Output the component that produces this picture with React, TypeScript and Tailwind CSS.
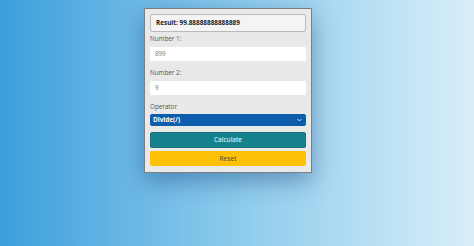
import React from "react";

export default function App() {
  return (
    <div
      className="w-[474px] h-[246px] overflow-hidden bg-gradient-to-r from-[#3a9fdc] via-[#8ccbec] to-[#d8eef9] pt-[8px]"
      style={{ fontFamily: '"Open Sans", "Noto Sans", sans-serif' }}
    >
      <div className="ml-[144px] w-[168px] bg-[#e9e9e9] border border-[#7a7f86] px-[5px] pt-[5px] pb-[6px] shadow-[0_8px_22px_rgba(10,50,110,0.4)]">
        <div className="h-[18px] flex items-center px-[5px] bg-[#f4f4f4] border border-[#b9b9b9] rounded-[2px] text-[6.4px] font-bold text-[#222]">
          Result: 99.88888888888889
        </div>
        <div className="mt-[1px] mb-[2px] h-[12px] leading-[12px] text-[6.3px] text-[#555]">Number 1:</div>
        <div className="h-[14px] bg-white flex items-center px-[5px] text-[6.2px] text-[#777]">899</div>
        <div className="mt-[6px] mb-[2px] h-[12px] leading-[12px] text-[6.3px] text-[#555]">Number 2:</div>
        <div className="h-[14px] bg-white flex items-center px-[5px] text-[6.2px] text-[#777]">9</div>
        <div className="mt-[6px] mb-[1px] h-[12px] leading-[12px] text-[6.3px] text-[#555]">Operator</div>
        <div className="h-[12px] bg-[#0c5ead] rounded-[2px] flex items-center justify-between pl-[3px] pr-[3px] text-[6.4px] font-bold text-white">
          <span>Divide(/)</span>
          <svg width="5" height="4" viewBox="0 0 10 6" className="mr-[1px]">
            <path d="M1 1 L5 5 L9 1" fill="none" stroke="#dbe8f7" strokeWidth="1.8" />
          </svg>
        </div>
        <div className="mt-[6px] h-[16px] bg-[#16828e] rounded-[2px] border border-[#1a6f79] flex items-center justify-center text-[6.6px] text-white">
          Calculate
        </div>
        <div className="mt-[3px] h-[15px] bg-[#ffc107] rounded-[2px] flex items-center justify-center text-[6.6px] text-[#444]">
          Reset
        </div>
      </div>
    </div>
  );
}
